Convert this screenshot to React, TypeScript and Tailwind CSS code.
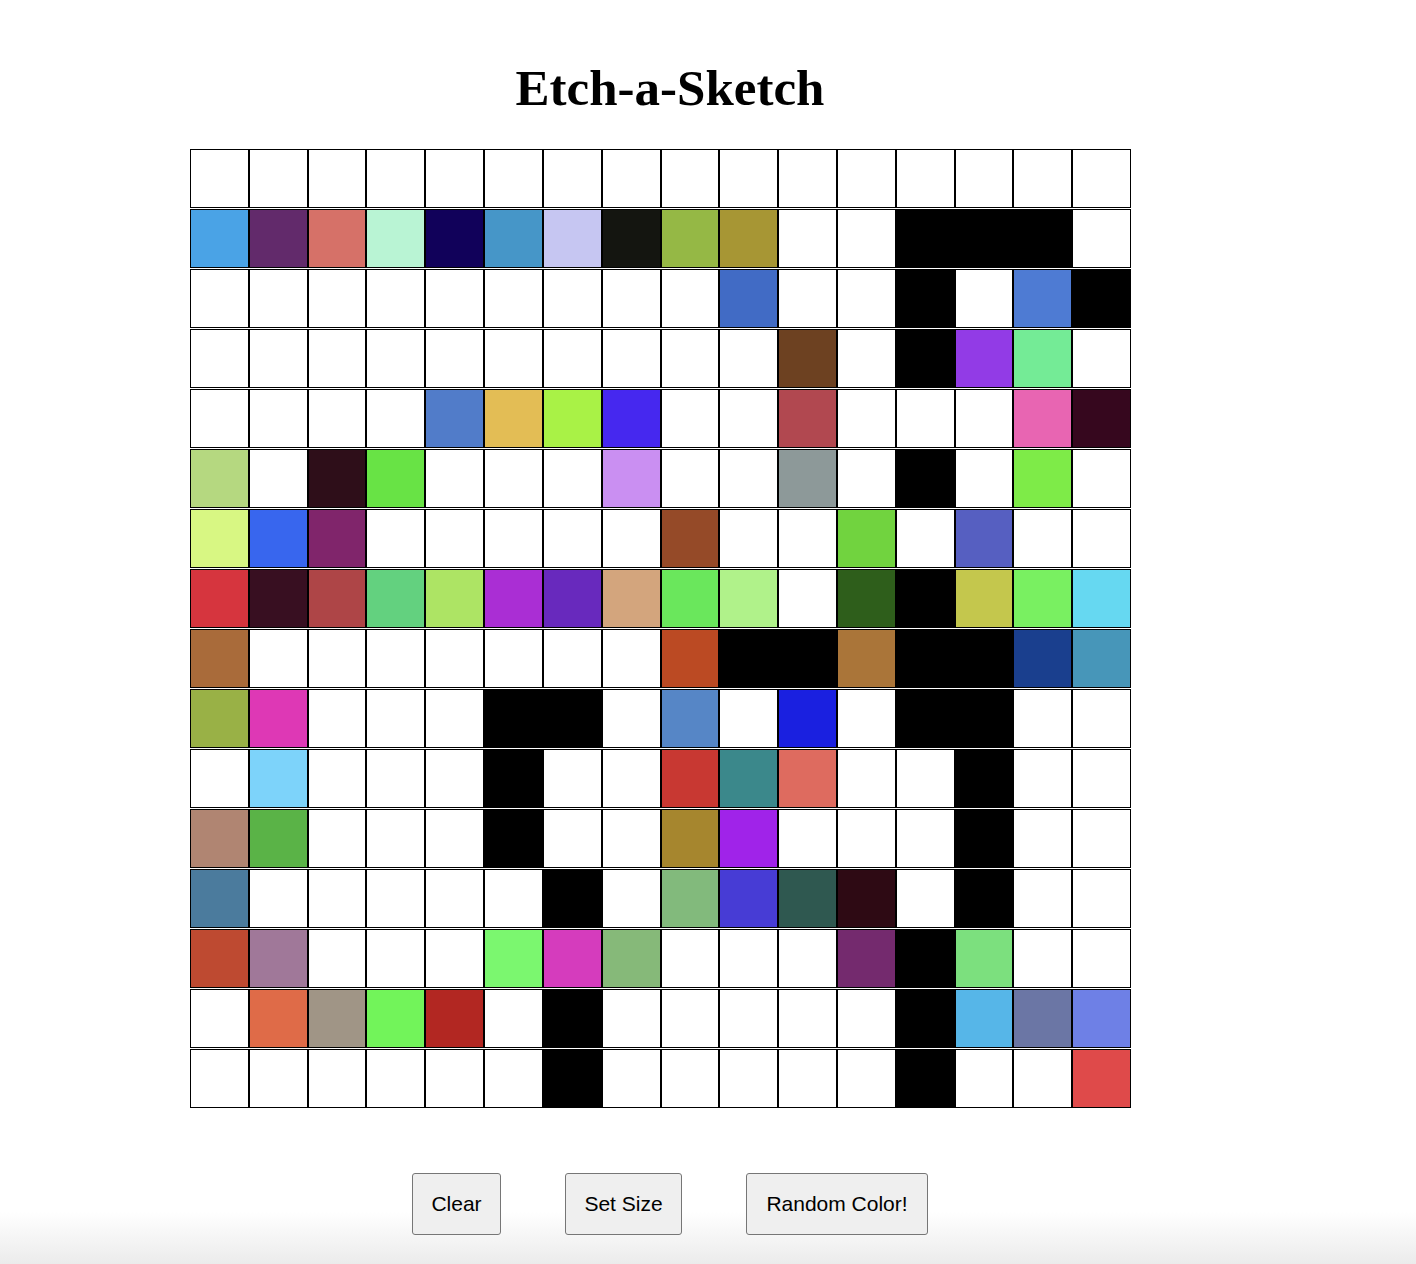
const W = '#ffffff'
const B = '#000000'

const rows: string[][] = [
  [W, W, W, W, W, W, W, W, W, W, W, W, W, W, W, W],
  ['#4aa3e6', '#622a6b', '#d67168', '#b9f4d4', '#11015a', '#4696c8', '#c6c6f2', '#141510', '#95b845', '#a79634', W, W, B, B, B, W],
  [W, W, W, W, W, W, W, W, W, '#416bc5', W, W, B, W, '#4e7bd3', B],
  [W, W, W, W, W, W, W, W, W, W, '#6d4121', W, B, '#923be6', '#74eb96', W],
  [W, W, W, W, '#517cc9', '#e3bd55', '#a9f246', '#4628ef', W, W, '#b14850', W, W, W, '#e865b2', '#36071e'],
  ['#b5d880', W, '#2e0e19', '#68e345', W, W, W, '#ca8ff2', W, W, '#8d9999', W, B, W, '#7eeb48', W],
  ['#d8f783', '#3866ee', '#80256b', W, W, W, W, W, '#954a28', W, W, '#71d33f', W, '#565fc1', W, W],
  ['#d6353e', '#380f21', '#ae4547', '#63d17f', '#ade464', '#aa2ed4', '#6829bd', '#d3a57d', '#6ae75c', '#b0f28a', W, '#2e5e1b', B, '#c4c74d', '#79f061', '#66d8f1'],
  ['#a96b3a', W, W, W, W, W, W, W, '#bb4a23', B, B, '#aa7539', B, B, '#1a3f8e', '#4796b9'],
  ['#99b146', '#de38b5', W, W, W, B, B, W, '#5686c6', W, '#1a20e0', W, B, B, W, W],
  [W, '#7dd3fa', W, W, W, B, W, W, '#c83832', '#3b888b', '#de6b5f', W, W, B, W, W],
  ['#b08572', '#5ab347', W, W, W, B, W, W, '#a6862e', '#a023e9', W, W, W, B, W, W],
  ['#4b7b9d', W, W, W, W, W, B, W, '#82ba7c', '#473cd5', '#2f5850', '#2e0a14', W, B, W, W],
  ['#be4a31', '#a07899', W, W, W, '#7bf76f', '#d53cbd', '#86b979', W, W, W, '#742a6e', B, '#7ce07e', W, W],
  [W, '#df6b48', '#a09586', '#72f45a', '#b22722', W, B, W, W, W, W, W, B, '#56b6e8', '#6b76a5', '#6e80e6'],
  [W, W, W, W, W, W, B, W, W, W, W, W, B, W, W, '#df4a4a'],
]

const buttons = [
  { label: 'Clear', width: 'w-[89px]' },
  { label: 'Set Size', width: 'w-[117px]' },
  { label: 'Random Color!', width: 'w-[182px]' },
]

export default function App() {
  return (
    <div className="min-h-[1264px] w-full bg-[linear-gradient(to_bottom,#ffffff_0px,#ffffff_1212px,#ebebeb_1264px)]">
      <div className="w-[1340px] flex flex-col items-center pt-[58px]">
        <h1 className="text-[51px] leading-[60px] font-bold text-black font-['Liberation_Serif','Times_New_Roman',serif]">
          Etch-a-Sketch
        </h1>

        {/* drawing grid */}
        <div className="self-start ml-[190px] mt-[31px] w-[941px] grid grid-cols-16 gap-y-px">
          {rows.flatMap((row, r) =>
            row.map((color, c) => (
              <div
                key={`${r}-${c}`}
                className="h-[59px] border border-black"
                style={{ backgroundColor: color }}
              />
            ))
          )}
        </div>

        <div className="mt-[65px] flex gap-[64px]">
          {buttons.map((btn) => (
            <button
              key={btn.label}
              className={`${btn.width} h-[62px] bg-[#efefef] border border-[#767676] rounded-[3px] text-[21px] text-black font-['Liberation_Sans',Arial,sans-serif]`}
            >
              {btn.label}
            </button>
          ))}
        </div>
      </div>
    </div>
  )
}
